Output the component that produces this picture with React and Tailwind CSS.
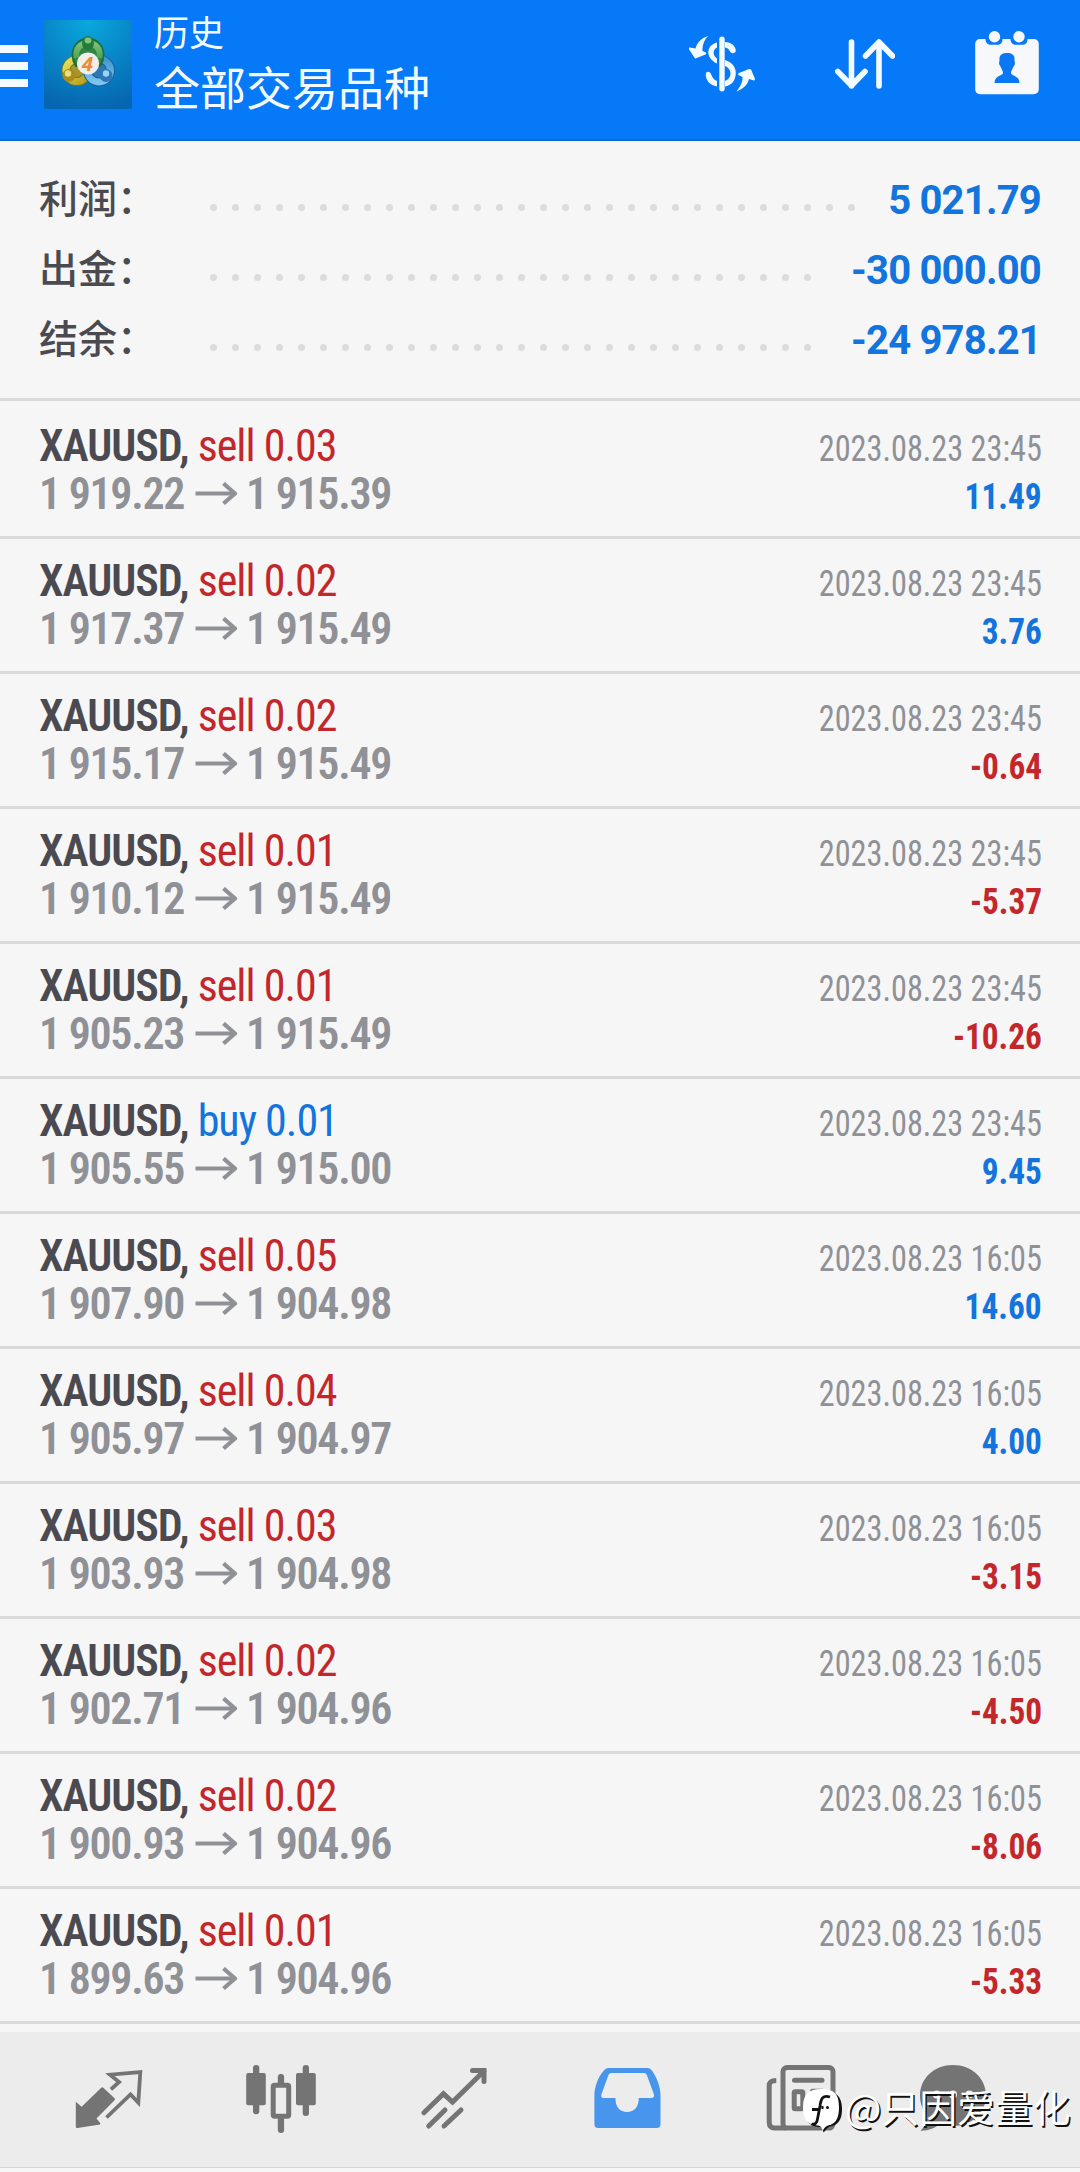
const SUMMARY = [
  { label: '利润', value: '5 021.79', dots: 30 },
  { label: '出金', value: '-30 000.00', dots: 28 },
  { label: '结余', value: '-24 978.21', dots: 28 },
]

const DEALS = [
  { side: 'sell', lots: '0.03', open: '1 919.22', close: '1 915.39', time: '2023.08.23 23:45', profit: '11.49' },
  { side: 'sell', lots: '0.02', open: '1 917.37', close: '1 915.49', time: '2023.08.23 23:45', profit: '3.76' },
  { side: 'sell', lots: '0.02', open: '1 915.17', close: '1 915.49', time: '2023.08.23 23:45', profit: '-0.64' },
  { side: 'sell', lots: '0.01', open: '1 910.12', close: '1 915.49', time: '2023.08.23 23:45', profit: '-5.37' },
  { side: 'sell', lots: '0.01', open: '1 905.23', close: '1 915.49', time: '2023.08.23 23:45', profit: '-10.26' },
  { side: 'buy', lots: '0.01', open: '1 905.55', close: '1 915.00', time: '2023.08.23 23:45', profit: '9.45' },
  { side: 'sell', lots: '0.05', open: '1 907.90', close: '1 904.98', time: '2023.08.23 16:05', profit: '14.60' },
  { side: 'sell', lots: '0.04', open: '1 905.97', close: '1 904.97', time: '2023.08.23 16:05', profit: '4.00' },
  { side: 'sell', lots: '0.03', open: '1 903.93', close: '1 904.98', time: '2023.08.23 16:05', profit: '-3.15' },
  { side: 'sell', lots: '0.02', open: '1 902.71', close: '1 904.96', time: '2023.08.23 16:05', profit: '-4.50' },
  { side: 'sell', lots: '0.02', open: '1 900.93', close: '1 904.96', time: '2023.08.23 16:05', profit: '-8.06' },
  { side: 'sell', lots: '0.01', open: '1 899.63', close: '1 904.96', time: '2023.08.23 16:05', profit: '-5.33' },
]

function AppLogo() {
  return (
    <svg viewBox="0 0 88 89" className="h-[89px] w-[88px] shrink-0">
      <defs>
        <radialGradient id="sky" cx="0.5" cy="0" r="1">
          <stop offset="0" stopColor="#0aa9dd" />
          <stop offset="0.5" stopColor="#0887c8" />
          <stop offset="1" stopColor="#0667b0" />
        </radialGradient>
        <linearGradient id="green" x1="0" y1="0" x2="0" y2="1">
          <stop offset="0" stopColor="#7cc07a" />
          <stop offset="1" stopColor="#4fa355" />
        </linearGradient>
        <linearGradient id="yellow" x1="0" y1="0" x2="1" y2="1">
          <stop offset="0" stopColor="#e6e05a" />
          <stop offset="1" stopColor="#b99c1c" />
        </linearGradient>
        <linearGradient id="blue" x1="0" y1="0" x2="0" y2="1">
          <stop offset="0" stopColor="#3f97cf" />
          <stop offset="1" stopColor="#7cc5ee" />
        </linearGradient>
      </defs>
      <rect width="88" height="89" fill="url(#sky)" />
      <circle cx="33" cy="50.500" r="11" fill="#a8962a" stroke="#6c7a2a" strokeWidth="9" />
      <circle cx="33" cy="50.500" r="11" fill="none" stroke="url(#yellow)" strokeWidth="7" />
      <circle cx="55" cy="50.500" r="11.500" fill="#2a78b4" stroke="#1b5f9a" strokeWidth="9" />
      <circle cx="55" cy="50.500" r="11.500" fill="none" stroke="url(#blue)" strokeWidth="7" />
      <path d="M29.500 41C26 28 34 18.500 44 18.500C54 18.500 62 28 58.500 41L56 46H32Z" fill="#2f8743" stroke="#1d6b3a" strokeWidth="2" />
      <path d="M32.500 38C31 28 37 23 44 23C51 23 57 28 55.500 38" fill="none" stroke="url(#green)" strokeWidth="6" />
      <ellipse cx="44" cy="23" rx="6" ry="7" fill="#237d37" />
      <ellipse cx="44" cy="20.500" rx="3.400" ry="3" fill="#7fc483" />
      <circle cx="25" cy="55.500" r="6.500" fill="#a88c1e" />
      <circle cx="24" cy="53.500" r="3.200" fill="#e9e07c" />
      <circle cx="62" cy="55.500" r="6.500" fill="#2a78ba" />
      <circle cx="62" cy="53.500" r="3.200" fill="#9bd3f2" />
      <circle cx="44" cy="43.500" r="11" fill="#f2eeea" />
      <text x="43.500" y="50.500" textAnchor="middle" fontFamily="Open Sans, sans-serif" fontSize="20" fontWeight="700" fontStyle="italic" fill="#ee8a34">4</text>
    </svg>
  )
}

function DollarIcon() {
  return (
    <svg viewBox="0 0 66 56" className="h-[56px] w-[66px]" fill="#f4fbff">
      <path d="M28 6.5C17 9 16 22 28 27.5V22.5C23.5 19.5 23.5 14 28 11.5Z" />
      <path d="M36 6C42 6 46.500 10 46.800 14.500C46.500 18 42.500 18 41 15.500C40 13 38.500 12 36 11.500V24C43 26 46.800 31 46.800 37C46.800 45 42 49.500 36 50.500V45C39.500 43.500 41.500 41 41.500 37.500C41.500 34 39.500 31.500 36 30Z" />
      <path d="M28 50.500C21 49 17 45 16.700 38.500C17 35 20.500 35 22 38C23 41 25 44 28 45Z" />
      <rect x="30.300" y="0.500" width="5.400" height="55" rx="2.700" />
      <path d="M19 0C12 2 8 7 6.500 12.500L0.800 11.500C-0.500 11.500 0 12.500 0 13.200L5.500 21.800C6 22.600 7 22.500 7.700 22L16.500 18.500C17.500 18 17.500 16.800 16.500 16.300L13.500 15C13 10 15 4 19 0Z" />
      <path d="M47.500 55.500C54 53 58.500 49 60 43L64.800 44.500C66 44.500 66 43.500 65.800 42.500L62.500 34.500C62 33 61 33 60 33L50 37C48.800 37.600 48.800 38.800 50 39.300L53.500 41C54 46 51 51 47.500 55.500Z" />
    </svg>
  )
}

function SortIcon() {
  return (
    <svg viewBox="0 0 60 50" className="h-[50px] w-[60px]" fill="none" stroke="#f4fbff" strokeWidth="5.600" strokeLinecap="round" strokeLinejoin="round">
      <path d="M16.500 3V47M2.800 32.500L16.500 46.500L30 32.500" />
      <path d="M44 47V3M30.500 17L44 3L57.500 17" />
    </svg>
  )
}

function CalendarIcon() {
  return (
    <svg viewBox="0 0 64 64" className="h-[64px] w-[64px]">
      <path d="M5 8H10.500C10.500 12 13 13.800 16 13.800H22C25.500 13.800 27.500 12 27.500 8H35.500C35.500 12 38 13.800 41 13.800H47C50.500 13.800 52.500 12 52.500 8H58.500C62 8 63.800 10 63.800 13V58C63.800 61 62 63.200 58.500 63.200H5C2 63.200 0.200 61 0.200 58V13C0.200 10 2 8 5 8Z" fill="#f6f8fb" />
      <circle cx="19.500" cy="5.700" r="5.700" fill="#f6f8fb" />
      <circle cx="44" cy="5.700" r="5.700" fill="#f6f8fb" />
      <path d="M32 22C37 22 40 24 39.500 29L40 33L38 36.500C37 39 36 40 36 42C36.500 45 44.500 44.500 44.500 52H19.500C19.500 44.500 27.500 45 28 42C28 40 27 39 26 36.500L24 33L24.500 29C24 24 27 22 32 22Z" fill="#0a78f5" />
    </svg>
  )
}

function PriceArrow() {
  return (
    <svg viewBox="0 0 43 24" className="mr-[8px] ml-[11px] h-[24px] w-[43px]" fill="none" stroke="#8f9196" strokeWidth="4.200">
      <path d="M0.500 11.500H40" />
      <path d="M28.500 1.500L40 11.500L28.500 21.500" strokeLinejoin="round" />
    </svg>
  )
}

function QuotesIcon() {
  return (
    <>
      <path d="M3.800 39.700L9.600 44.700L29 26C29.900 25 30.700 25 31.600 26L42.300 36C43.200 37 43.200 37.700 42.300 38.500L24.500 56.500L28.500 61.500C28 62.500 27.500 62.700 26.500 62.800L5.500 66C4.200 66 3.800 65.500 3.800 64.500Z" />
      <path d="M38.900 27.300L47.100 20L38 12.700L68.300 10L66.300 40.500L58.500 32.500L34.500 55.500" fill="none" stroke="currentColor" strokeWidth="3.800" />
    </>
  )
}

function CandlesIcon() {
  return (
    <>
      <rect x="1.200" y="11" width="19.600" height="32.300" rx="2" />
      <rect x="8" y="3" width="6.300" height="49.300" rx="3" />
      <rect x="28.200" y="23.300" width="15.500" height="31" rx="1.500" fill="none" stroke="currentColor" strokeWidth="5" />
      <rect x="32.800" y="12" width="6.300" height="12" rx="3" />
      <rect x="32.800" y="55" width="6.300" height="16" rx="3" />
      <rect x="51" y="11" width="19.800" height="32.300" rx="2" />
      <rect x="57.700" y="3" width="6.300" height="51" rx="3" />
    </>
  )
}

function TrendIcon() {
  return (
    <g fill="none" stroke="currentColor" strokeWidth="5" strokeLinecap="round">
      <path d="M5.900 50.700L25.500 31.800L34.500 40L66 9" />
      <path d="M54.500 8.500H66V19.500" />
      <path d="M10.700 64L27 48" />
      <path d="M26 64L43 48" />
    </g>
  )
}

function InboxIcon() {
  return (
    <path
      fillRule="evenodd"
      d="M18 6H56C58.500 6 60 7 61.300 9C66.500 17 69.500 25 69.500 34V62C69.500 65 68 66 65.500 66H7.500C4.800 66 3.400 65 3.400 62V34C3.400 25 7 15 12.500 9C14 7 15.500 6 18 6ZM20.500 11C19 11 17.800 12 17.300 13.500L10.500 32C9.800 34.500 10.500 36 12.500 36H24.400C24.400 45 29 50 36 50C43 50 47.800 45 47.800 36H60.500C62.500 36 63.500 34.500 62.800 32L56 13.500C55.500 12 54.500 11 53 11Z"
    />
  )
}

function NewsIcon() {
  return (
    <g fill="none" stroke="currentColor" strokeWidth="5">
      <rect x="19" y="5.500" width="50" height="60.600" rx="4" />
      <path d="M12.300 18.500C7.500 18.500 5.200 20 5.200 24V60C5.200 64 7 66.100 10.500 66.100H22" />
      <path d="M30.500 18.300H58" strokeLinecap="round" />
      <rect x="30.200" y="29.800" width="8.600" height="17" rx="1" />
      <path d="M48.500 29.300H58" strokeLinecap="round" />
    </g>
  )
}

function ChatIcon() {
  return (
    <>
      <path d="M36 3C54.500 3 69 16 69 33.500C69 51 54.500 64 36 64C31 64 27 63 23.500 61.500C18 66 11 69 3.500 68.700C7.500 65 9.500 60 9.700 53C5.500 47.500 3 41 3 33.500C3 16 17.500 3 36 3Z" />
      <g fill="#eeeeef">
        <circle cx="19.700" cy="32.500" r="4" />
        <circle cx="36" cy="32.500" r="4" />
        <circle cx="52.400" cy="32.500" r="4" />
      </g>
    </>
  )
}

const TABS = [
  { id: 'quotes', Icon: QuotesIcon },
  { id: 'chart', Icon: CandlesIcon },
  { id: 'trade', Icon: TrendIcon },
  { id: 'history', Icon: InboxIcon, active: true },
  { id: 'news', Icon: NewsIcon },
  { id: 'chat', Icon: ChatIcon },
]

function Header() {
  return (
    <header className="flex h-[141px] items-start border-b-2 border-[#0b6ad0] bg-[#0679f8] text-[#f4fbff]">
      <div className="mt-[45px] flex w-[28px] flex-col gap-[9px]">
        <span className="h-[8px] bg-[#f4fbff]" />
        <span className="h-[8px] bg-[#f4fbff]" />
        <span className="h-[8px] bg-[#f4fbff]" />
      </div>
      <div className="mt-[20px] ml-[16px]">
        <AppLogo />
      </div>
      <div className="ml-[22px] flex-1 whitespace-nowrap font-['Noto_Sans_CJK_SC',sans-serif]">
        <p className="mt-[6px] text-[35px] leading-[50px]">历史</p>
        <p className="mt-[-2px] text-[46px] leading-[62px]">全部交易品种</p>
      </div>
      <div className="mt-[31px] mr-[41px] flex items-start">
        <div className="mt-[5px]"><DollarIcon /></div>
        <div className="mt-[8px] ml-[80px]"><SortIcon /></div>
        <div className="ml-[80px]"><CalendarIcon /></div>
      </div>
    </header>
  )
}

function Summary() {
  return (
    <section className="h-[260px] border-b-[3px] border-[#dadada] pt-[24px] pr-[39px] pl-[39px]">
      {SUMMARY.map((s) => (
        <div key={s.label} className="flex h-[70px] items-center">
          <span className="w-[171px] pb-[7px] font-['Noto_Sans_CJK_SC',sans-serif] text-[39px] leading-[63px] font-medium whitespace-nowrap">
            {s.label}：
          </span>
          <span className="mt-[15px] flex gap-[15px]">
            {Array.from({ length: s.dots }, (_, i) => (
              <i key={i} className="size-[7px] rounded-full bg-[#dcdcdc]" />
            ))}
          </span>
          <span className="ml-auto pt-[2px] font-['Roboto',sans-serif] text-[40px] leading-[66px] font-bold tracking-[-0.8px] text-[#1274dc]">{s.value}</span>
        </div>
      ))}
    </section>
  )
}

function DealRow({ deal }) {
  const loss = deal.profit.startsWith('-')
  return (
    <li className="h-[135px] border-b-[3px] border-[#dadada] pt-[18px] pr-[38px] pl-[39px] leading-[48px] whitespace-nowrap">
      <div className="flex h-[48px] items-baseline justify-between">
        <p className="text-[44px] tracking-[-1px]">
          <span className="font-semibold">XAUUSD, </span>
          <span className={deal.side === 'sell' ? 'text-[#c3272b]' : 'text-[#1274dc]'}>{deal.side} {deal.lots}</span>
        </p>
        <p className="origin-right scale-x-[0.872] text-[37px] text-[#8f9196]">{deal.time}</p>
      </div>
      <div className="flex h-[48px] items-baseline justify-between">
        <div className="flex items-center text-[44px] font-semibold tracking-[-1.3px] text-[#8f9196]">
          <span>{deal.open}</span>
          <PriceArrow />
          <span>{deal.close}</span>
        </div>
        <p className={`origin-right scale-x-90 text-[37px] font-bold ${loss ? 'text-[#c3272b]' : 'text-[#1274dc]'}`}>{deal.profit}</p>
      </div>
    </li>
  )
}

function TabBar() {
  return (
    <nav className="mt-[8px] flex h-[136px] gap-[101px] border-b border-[#d6d6d6] bg-[#ececed] pt-[30px] pl-[72px]">
      {TABS.map(({ id, Icon, active }) => (
        <svg
          key={id}
          viewBox="0 0 72 76"
          fill="currentColor"
          className={`h-[76px] w-[72px] shrink-0 last:-ml-[20px] ${active ? 'text-[#4795ed]' : 'text-[#747474]'}`}
        >
          <Icon />
        </svg>
      ))}
    </nav>
  )
}

function Watermark() {
  return (
    <div className="absolute right-[9px] bottom-[39px] flex items-center font-['Noto_Sans_CJK_SC',sans-serif] text-[37.5px] leading-[54px] tracking-[0.4px] whitespace-nowrap text-white [text-shadow:1.5px_1.5px_0_#111]">
      <svg viewBox="0 0 40 44" className="mt-[10px] mr-[2px] h-[44px] w-[40px]">
        <path d="M20 2C34 2 39 8 39 20C39 31 35 36 27 37.500C24 38.500 23 41 20.500 43.500C20 40 19 38 16 38C5 37 2 31 2 20C2 7 8 2 20 2Z" fill="#111" />
        <path d="M18 0C32 0 36 6 36 18C36 29 33 35 25 36.500C22 37.500 21 39.500 19.500 42C19 38 17 36.500 14 36.500C3 35.500 0 29 0 18C0 5 6 0 18 0Z" fill="#fff" />
        <path d="M27 8C20 6 18 9 17 17L14.500 30C14 34 12 36 8.500 35M9 20.500H17M18.500 18.500H20.500" fill="none" stroke="#111" strokeWidth="2.800" />
        <circle cx="24.500" cy="18.500" r="1.500" fill="#111" />
      </svg>
      <span className="text-[38.500px] tracking-normal">@</span>
      <span>只因爱量化</span>
    </div>
  )
}

export default function App() {
  return (
    <div className="relative h-[2172px] w-[1080px] overflow-hidden bg-[#f6f6f6] font-['Roboto_Condensed',sans-serif] text-[#4b4a50]">
      <Header />
      <Summary />
      <ul className="pt-[3px]">
        {DEALS.map((deal, i) => (
          <DealRow key={i} deal={deal} />
        ))}
      </ul>
      <TabBar />
      <Watermark />
    </div>
  )
}
